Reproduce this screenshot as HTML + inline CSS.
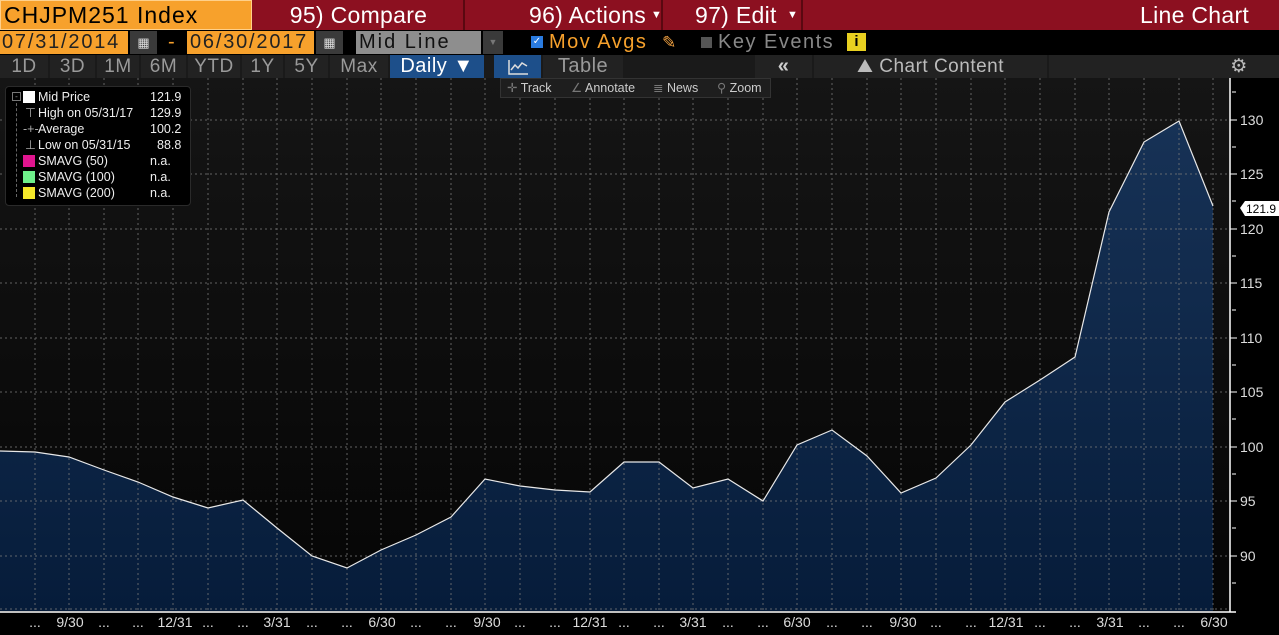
<!DOCTYPE html>
<html><head><meta charset="utf-8"><style>
*{margin:0;padding:0;box-sizing:border-box}
body{width:1279px;height:635px;background:#000;overflow:hidden;font-family:"Liberation Sans",sans-serif;position:relative}
.a{position:absolute;white-space:nowrap}
.r1{top:0;height:30px;background:#8c1020;color:#fff;font-size:23px;line-height:30px;letter-spacing:0.3px}
.r3{top:55px;height:23px;background:#222;color:#9a9a9a;font-size:19px;line-height:23px;text-align:center;letter-spacing:0.5px}
.r2{font-size:20px;line-height:23px;letter-spacing:1px}
</style></head><body>
<!-- row1 -->
<div class="a r1" style="left:0;width:1279px;background:#8c1020"></div>
<div class="a" style="left:0;top:0;width:252px;height:30px;background:#f7a12c;border:1px solid #ffd08a;color:#000;font-size:23px;line-height:29px;padding-left:3px;letter-spacing:1px">CHJPM251 Index</div>
<div class="a r1" style="left:254px;width:211px;text-align:center;border-right:2px solid #5a0810">95) Compare</div>
<div class="a r1" style="left:467px;width:196px;padding-left:62px;border-right:2px solid #5a0810">96) Actions <span style="font-size:11px;position:absolute;left:184px">▼</span></div>
<div class="a r1" style="left:665px;width:138px;padding-left:30px;border-right:2px solid #5a0810">97) Edit <span style="font-size:11px;position:absolute;left:122px">▼</span></div>
<div class="a r1" style="left:1140px;background:none">Line Chart</div>
<!-- row2 -->
<div class="a r2" style="left:0;top:31px;width:128px;height:23px;background:#f7a12c;color:#222;padding-left:2px;letter-spacing:1.8px">07/31/2014</div>
<div class="a" style="left:130px;top:31px;width:27px;height:23px;background:#3a3a3a;color:#ddd;font-size:13px;line-height:23px;text-align:center">▦</div>
<div class="a r2" style="left:168px;top:31px;color:#f7a12c">-</div>
<div class="a r2" style="left:187px;top:31px;width:127px;height:23px;background:#f7a12c;color:#222;padding-left:3px;letter-spacing:1.8px">06/30/2017</div>
<div class="a" style="left:316px;top:31px;width:27px;height:23px;background:#3a3a3a;color:#ddd;font-size:13px;line-height:23px;text-align:center">▦</div>
<div class="a r2" style="left:356px;top:31px;width:125px;height:23px;background:#8e8e8e;color:#111;padding-left:3px;letter-spacing:2px">Mid Line</div>
<div class="a" style="left:483px;top:31px;width:20px;height:23px;background:#3a3a3a;color:#777;font-size:9px;line-height:23px;text-align:center">▼</div>
<div class="a" style="left:531px;top:36px;width:12px;height:12px;background:#2a7be0;color:#fff;font-size:10px;line-height:12px;text-align:center">✓</div>
<div class="a r2" style="left:549px;top:31px;color:#f7a12c;letter-spacing:1.5px">Mov Avgs</div>
<div class="a" style="left:662px;top:31px;color:#f0a040;font-size:17px;line-height:23px">✎</div>
<div class="a" style="left:701px;top:37px;width:11px;height:11px;background:#555"></div>
<div class="a r2" style="left:718px;top:31px;color:#888;letter-spacing:1.5px">Key Events</div>
<div class="a" style="left:847px;top:33px;width:19px;height:18px;background:#e8d020;color:#000;font-size:15px;font-weight:bold;line-height:18px;text-align:center">i</div>
<!-- row3 -->
<div class="a r3" style="left:0;width:1279px;background:#1a1a1a"></div>
<div class="a r3" style="left:0;width:48px">1D</div>
<div class="a r3" style="left:50px;width:45px">3D</div>
<div class="a r3" style="left:97px;width:42px">1M</div>
<div class="a r3" style="left:141px;width:45px">6M</div>
<div class="a r3" style="left:188px;width:52px">YTD</div>
<div class="a r3" style="left:242px;width:41px">1Y</div>
<div class="a r3" style="left:285px;width:43px">5Y</div>
<div class="a r3" style="left:330px;width:58px">Max</div>
<div class="a r3" style="left:390px;width:94px;background:#1d4f8a;color:#fff;font-size:20px">Daily ▼</div>
<div class="a r3" style="left:494px;width:47px;background:#1d4f8a;color:#ddd">
<svg width="24" height="18" style="margin-top:3px"><path d="M3 2V16H22M5 12L9 7L12 10L16 5L21 8" stroke="#ddd" fill="none" stroke-width="1.5"/></svg></div>
<div class="a r3" style="left:543px;width:80px;font-size:20px">Table</div>
<div class="a r3" style="left:755px;width:57px;font-size:20px;color:#ccc;font-weight:bold">«</div>
<div class="a r3" style="left:814px;width:233px;font-size:19px;color:#bbb">⛰ Chart Content</div>
<div class="a r3" style="left:1049px;width:230px;padding-left:150px;color:#bbb">⚙</div>
<!-- chart -->
<svg class="a" style="left:0;top:78px" width="1279" height="557">
<defs>
<linearGradient id="bg" x1="0" y1="0" x2="0" y2="1"><stop offset="0" stop-color="#151515"/><stop offset="1" stop-color="#050505"/></linearGradient>
<linearGradient id="fl" x1="0" y1="0" x2="0" y2="1"><stop offset="0" stop-color="#173256"/><stop offset="1" stop-color="#061c3a"/></linearGradient>
</defs>
<rect x="0" y="0" width="1230" height="534" fill="url(#bg)"/>
<g transform="translate(0,-78)">
<polygon fill="url(#fl)" points="0,451 35,452 69,457 104,470 138,482 173,497 208,508 243,500 277,528 312,556 347,568 381,550 416,535 451,517 485,479 520,486 555,490 590,492 624,462 659,462 693,488 728,479 763,501 797,445 832,430 867,456 901,493 936,478 971,445 1005,402 1040,380 1075,357 1109,212 1144,142 1179,121 1213,206 1213,611 0,611"/>
<g stroke="#777" stroke-dasharray="2,3" stroke-width="1" opacity="0.8">
<path d="M35 78V611M69 78V611M104 78V611M138 78V611M173 78V611M208 78V611M243 78V611M277 78V611M312 78V611M347 78V611M381 78V611M416 78V611M451 78V611M485 78V611M520 78V611M555 78V611M590 78V611M624 78V611M659 78V611M693 78V611M728 78V611M763 78V611M797 78V611M832 78V611M867 78V611M901 78V611M936 78V611M971 78V611M1005 78V611M1040 78V611M1075 78V611M1109 78V611M1144 78V611M1179 78V611M1213 78V611"/>
<path d="M0 120H1230M0 174H1230M0 229H1230M0 283H1230M0 338H1230M0 392H1230M0 447H1230M0 501H1230M0 556H1230M0 609H1230"/>
</g>
<polyline fill="none" stroke="#e8e8e8" stroke-width="1.2" points="0,451 35,452 69,457 104,470 138,482 173,497 208,508 243,500 277,528 312,556 347,568 381,550 416,535 451,517 485,479 520,486 555,490 590,492 624,462 659,462 693,488 728,479 763,501 797,445 832,430 867,456 901,493 936,478 971,445 1005,402 1040,380 1075,357 1109,212 1144,142 1179,121 1213,206"/>
<path d="M1230 78V612M0 612H1236" stroke="#fff" stroke-width="1.5"/>
<g fill="#ddd" font-family="Liberation Sans" font-size="14">
<text x="1240" y="125">130</text><text x="1240" y="179">125</text><text x="1240" y="234">120</text><text x="1240" y="288">115</text><text x="1240" y="343">110</text><text x="1240" y="397">105</text><text x="1240" y="452">100</text><text x="1240" y="506">95</text><text x="1240" y="561">90</text>
</g>
<path d="M1232 92h4M1232 147h4M1232 201h4M1232 256h4M1232 310h4M1232 365h4M1232 419h4M1232 474h4M1232 528h4M1232 583h4M1230 120h7M1230 174h7M1230 229h7M1230 283h7M1230 338h7M1230 392h7M1230 447h7M1230 501h7M1230 556h7" stroke="#fff"/>
<path d="M1240 208l5-7h34v15h-34z" fill="#fff"/>
<text x="1246" y="213" font-family="Liberation Sans" font-size="12" fill="#000">121.9</text>
<g fill="#ddd" font-family="Liberation Sans" font-size="14" text-anchor="middle">
<text x="35" y="627">...</text><text x="70" y="627">9/30</text><text x="104" y="627">...</text><text x="138" y="627">...</text><text x="175" y="627">12/31</text><text x="208" y="627">...</text><text x="243" y="627">...</text><text x="277" y="627">3/31</text><text x="312" y="627">...</text><text x="347" y="627">...</text><text x="382" y="627">6/30</text><text x="416" y="627">...</text><text x="451" y="627">...</text><text x="487" y="627">9/30</text><text x="520" y="627">...</text><text x="555" y="627">...</text><text x="590" y="627">12/31</text><text x="624" y="627">...</text><text x="659" y="627">...</text><text x="693" y="627">3/31</text><text x="728" y="627">...</text><text x="763" y="627">...</text><text x="797" y="627">6/30</text><text x="832" y="627">...</text><text x="867" y="627">...</text><text x="903" y="627">9/30</text><text x="936" y="627">...</text><text x="971" y="627">...</text><text x="1006" y="627">12/31</text><text x="1040" y="627">...</text><text x="1075" y="627">...</text><text x="1110" y="627">3/31</text><text x="1144" y="627">...</text><text x="1179" y="627">...</text><text x="1214" y="627">6/30</text>
</g>
</g>
</svg>
<!-- toolbar -->
<div class="a" style="left:500px;top:78px;width:271px;height:20px;background:#1e1e1e;border:1px solid #333;color:#ccc;font-size:12.5px;line-height:18px">
<span class="a" style="left:6px"><span style="color:#777">✛</span> Track</span>
<span class="a" style="left:70px"><span style="color:#777">∠</span> Annotate</span>
<span class="a" style="left:152px"><span style="color:#777">≣</span> News</span>
<span class="a" style="left:216px"><span style="color:#777">⚲</span> Zoom</span>
</div>
<!-- legend -->
<div class="a" style="left:5px;top:86px;width:186px;height:120px;background:#000;border:1px solid #2a2a2a;border-radius:4px;color:#eee;font-size:12.5px;line-height:16px">
<div class="a" style="left:10px;top:6px;width:1px;height:104px;border-left:1px dashed #666"></div>
<div class="a" style="left:6px;top:5px;width:9px;height:9px;border:1px solid #777;background:#000;font-size:8px;line-height:7px;text-align:center;color:#999">-</div>
<div class="a" style="left:17px;top:4px;width:12px;height:12px;background:#fff"></div>
<div class="a" style="left:32px;top:2px">Mid Price</div><div class="a" style="left:144px;top:2px">121.9</div>
<div class="a" style="left:19px;top:18px;color:#aaa">⊤</div><div class="a" style="left:32px;top:18px">High on 05/31/17</div><div class="a" style="left:144px;top:18px">129.9</div>
<div class="a" style="left:17px;top:34px;color:#aaa">-+-</div><div class="a" style="left:32px;top:34px">Average</div><div class="a" style="left:144px;top:34px">100.2</div>
<div class="a" style="left:19px;top:50px;color:#aaa">⊥</div><div class="a" style="left:32px;top:50px">Low on 05/31/15</div><div class="a" style="left:151px;top:50px">88.8</div>
<div class="a" style="left:17px;top:68px;width:12px;height:12px;background:#e0158f"></div><div class="a" style="left:32px;top:66px">SMAVG (50)</div><div class="a" style="left:144px;top:66px">n.a.</div>
<div class="a" style="left:17px;top:84px;width:12px;height:12px;background:#6ef08a"></div><div class="a" style="left:32px;top:82px">SMAVG (100)</div><div class="a" style="left:144px;top:82px">n.a.</div>
<div class="a" style="left:17px;top:100px;width:12px;height:12px;background:#f4e82a"></div><div class="a" style="left:32px;top:98px">SMAVG (200)</div><div class="a" style="left:144px;top:98px">n.a.</div>
</div>
</body></html>
